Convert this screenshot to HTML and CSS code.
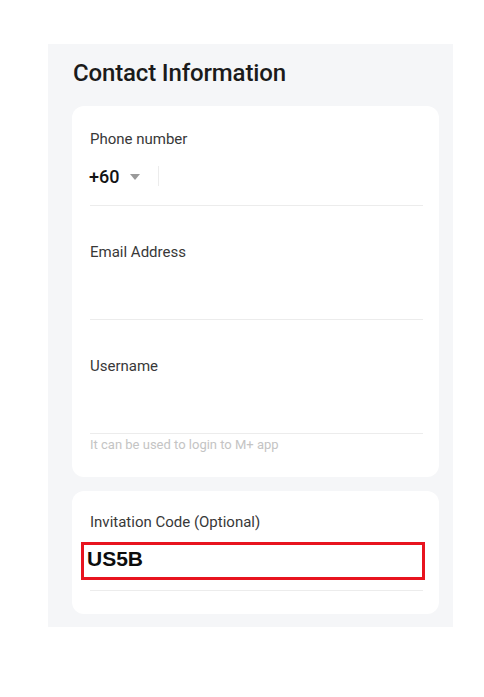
FILE: index.html
```html
<!DOCTYPE html>
<html>
<head>
<meta charset="utf-8">
<link rel="stylesheet" href="styles.css">
</head>
<body>
<section class="panel">
  <h1 class="title">Contact Information</h1>
  <div class="card">
    <div class="field field-first">
      <div class="label">Phone number</div>
      <div class="phone-row">
        <span class="code">+60</span>
        <span class="caret"></span>
        <span class="vsep"></span>
      </div>
    </div>
    <div class="field">
      <div class="label">Email Address</div>
      <div class="input-area"></div>
    </div>
    <div class="field">
      <div class="label">Username</div>
      <div class="input-area"></div>
    </div>
    <div class="hint">It can be used to login to M+ app</div>
  </div>
  <div class="card card-2">
    <div class="label">Invitation Code (Optional)</div>
    <div class="code-box">US5B</div>
    <div class="rule"></div>
  </div>
</section>
</body>
</html>
```

FILE: styles.css
```css
* { box-sizing: border-box; }
html, body { margin: 0; padding: 0; background: #ffffff; }
body { font-family: Roboto, "Liberation Sans", sans-serif; }

.panel {
  margin: 44px 0 0 48px;
  width: 405px;
  height: 583px;
  background: #f5f6f8;
  padding: 13px 14px 0 24px;
}

.title {
  margin: 0 0 17px 1px;
  font-size: 24px;
  line-height: 32px;
  font-weight: 500;
  letter-spacing: -0.15px;
  color: #1b1b1b;
}

.card {
  background: #ffffff;
  border-radius: 12px;
  padding: 23px 16px 24px 18px;
}

.card-2 {
  margin-top: 14px;
  padding-top: 21px;
  padding-bottom: 23px;
}

.label {
  font-size: 15px;
  line-height: 20px;
  color: #383838;
}

.field {
  padding-top: 36px;
  border-bottom: 1px solid #ececec;
}
.field-first { padding-top: 0; }

.phone-row {
  height: 54px;
  margin-bottom: 2px;
  display: flex;
  align-items: center;
}

.code {
  font-size: 18px;
  font-weight: 500;
  color: #141414;
  margin-left: -1px;
}

.caret {
  width: 0;
  height: 0;
  border-left: 5px solid transparent;
  border-right: 5px solid transparent;
  border-top: 6px solid #9a9a9a;
  margin-left: 11px;
  margin-top: 1px;
}

.vsep {
  width: 1px;
  height: 20px;
  background: #ececec;
  margin-left: 18px;
}

.input-area { height: 57px; }

.hint {
  margin-top: 3px;
  font-size: 13px;
  line-height: 16px;
  color: #c4c4c4;
}

.code-box {
  margin: 10px -2px 10px -9px;
  height: 38px;
  border: 3px solid #e8141f;
  padding: 2px 0 0 3px;
  font-family: "Liberation Sans", Arial, sans-serif;
  font-weight: 700;
  font-size: 21px;
  line-height: 24px;
  color: #0c0c0c;
}

.rule {
  height: 1px;
  background: #ececec;
}
```
